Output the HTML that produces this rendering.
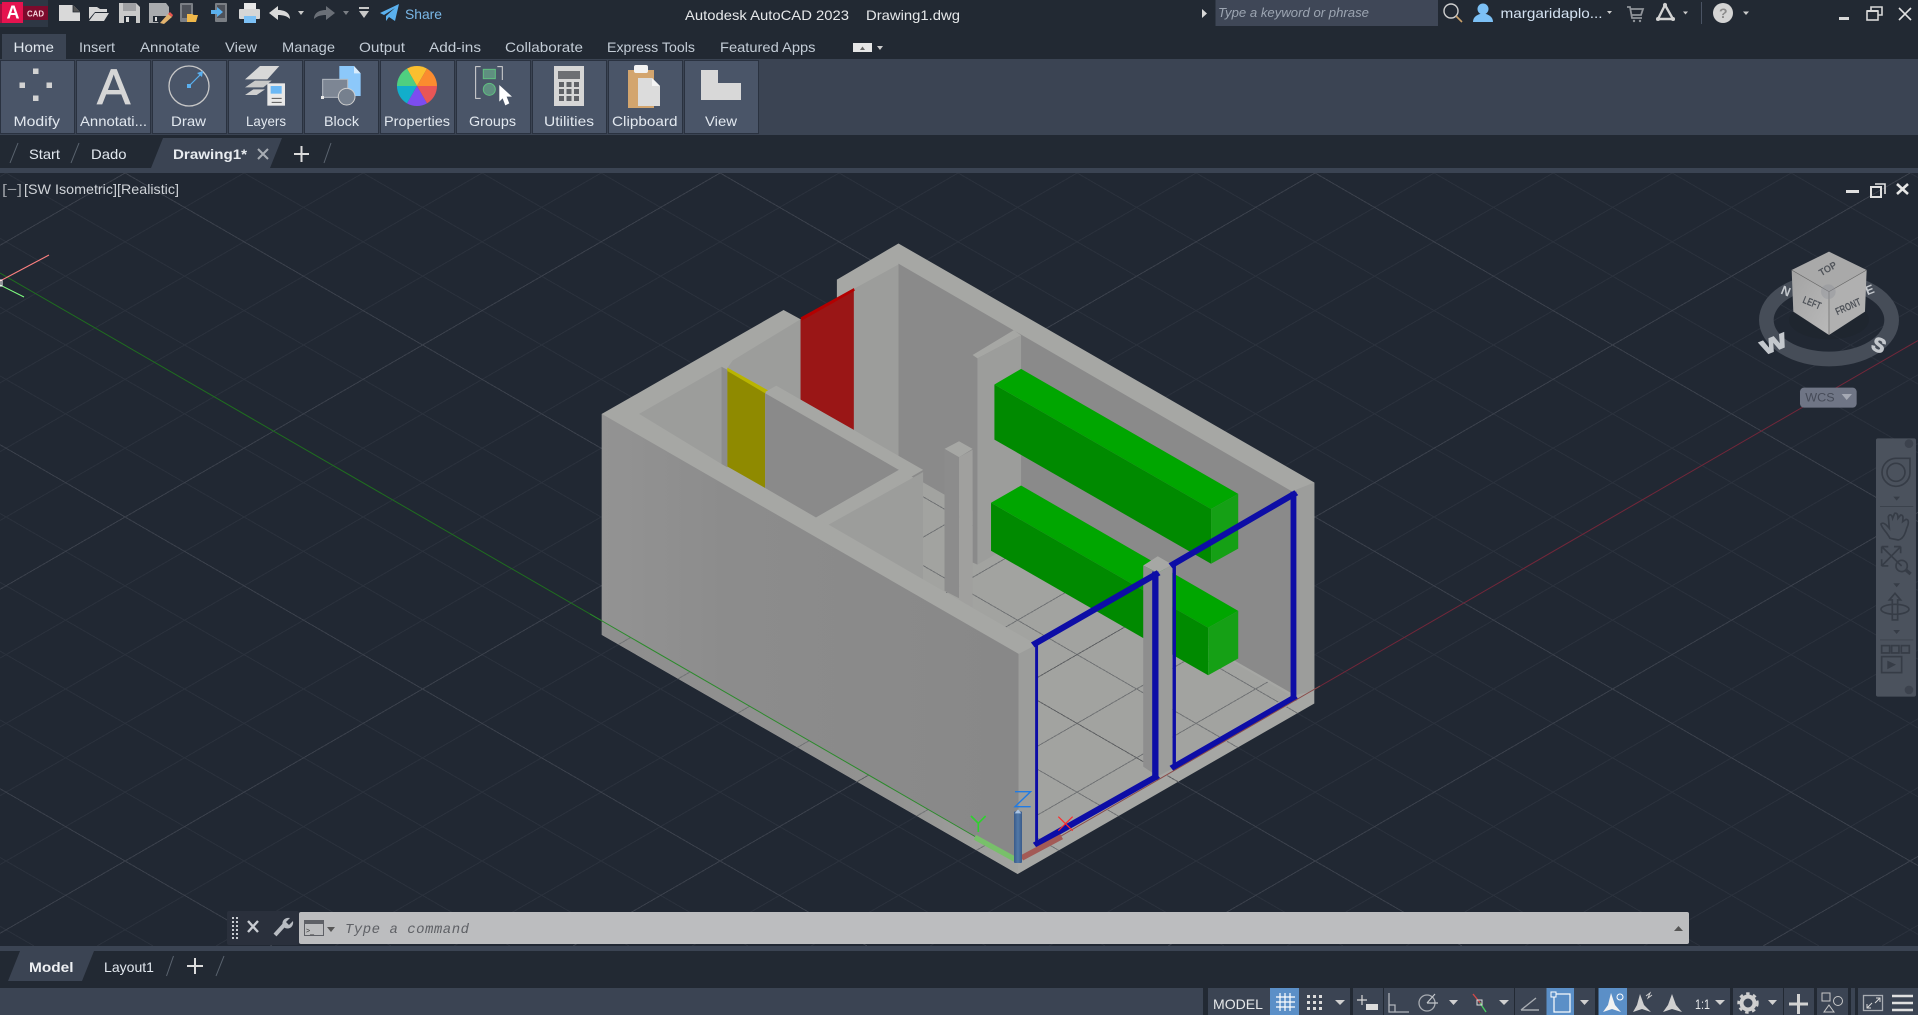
<!DOCTYPE html>
<html lang="en"><head><meta charset="utf-8"><title>Autodesk AutoCAD 2023</title>
<style>
html,body{margin:0;padding:0;width:1918px;height:1015px;background:#212833;overflow:hidden}
svg{display:block}
text{font-family:"Liberation Sans",sans-serif}
.t{font-size:14px;fill:#c3ccd6}
.p{font-size:14px;fill:#e2e8ef}
</style></head><body>
<svg xmlns="http://www.w3.org/2000/svg" width="1918" height="1015" viewBox="0 0 1918 1015">
<defs>
<path id="gminor" fill="none" shape-rendering="crispEdges" d="M1910.1 173L1918 177.6M1791.1 173L1918 246.4M1672.1 173L1918 315.2M1553.1 173L1918 384M1434.1 173L1918 452.8M1196.1 173L1918 590.4M1077.1 173L1918 659.2M958.1 173L1918 728M839.1 173L1918 796.8M601.1 173L1918 934.4M482.1 173L1819.1 946M363.1 173L1700.1 946M244.1 173L1581.1 946M6.1 173L1343.1 946M0 238.3L1224.1 946M0 307.1L1105.1 946M0 375.9L986.1 946M0 513.5L748.1 946M0 582.3L629.1 946M0 651.1L510.1 946M0 719.9L391.1 946M0 857.5L153.1 946M0 926.3L34.1 946M0 176.5L6.1 173M0 314.1L244.1 173M0 382.9L363.1 173M0 451.7L482.1 173M0 520.5L601.1 173M0 658.1L839.1 173M0 726.9L958.1 173M0 795.7L1077.1 173M0 864.5L1196.1 173M97 946L1434.1 173M216 946L1553.1 173M335 946L1672.1 173M454 946L1791.1 173M692 946L1918 237.2M811 946L1918 306M930 946L1918 374.8M1049.1 946L1918 443.6M1287.1 946L1918 581.2M1406.1 946L1918 650M1525.1 946L1918 718.8M1644.1 946L1918 787.6M1882.1 946L1918 925.2"/>
<path id="gmajor" fill="none" shape-rendering="crispEdges" d="M1315.1 173L1918 521.6M720.1 173L1918 865.6M125.1 173L1462.1 946M0 444.7L867.1 946M0 788.7L272.1 946M0 245.3L125.1 173M0 589.3L720.1 173M0 933.3L1315.1 173M573 946L1910.1 173M1168.1 946L1918 512.4M1763.1 946L1918 856.4"/>
<linearGradient id="wallg" x1="0" y1="0" x2="1" y2="0"><stop offset="0" stop-color="#939393"/><stop offset=".3" stop-color="#8c8c8c"/><stop offset="1" stop-color="#888"/></linearGradient>
<linearGradient id="stripg" x1="0" y1="0" x2="1" y2="0"><stop offset="0" stop-color="#8e8e8e"/><stop offset=".7" stop-color="#929291"/><stop offset="1" stop-color="#a3a4a1"/></linearGradient>
<linearGradient id="cubeL" x1="0" y1="0" x2="1" y2="1"><stop offset="0" stop-color="#a3a3a3"/><stop offset="1" stop-color="#b9b9b9"/></linearGradient>
<linearGradient id="zcyl" x1="0" y1="0" x2="1" y2="0"><stop offset="0" stop-color="#385a8a"/><stop offset=".5" stop-color="#5279a8"/><stop offset="1" stop-color="#385a8a"/></linearGradient>
<clipPath id="floorclip">
<polygon transform="translate(580,230) scale(.4847,.4209)" points="708,600 1465,1105 942,1460 942,985 708,830"/>
<polygon transform="translate(580,230) scale(.4847,.4209)" points="45,930 905,1500 903,1530 45,962"/>
<polygon transform="translate(580,230) scale(.4847,.4209)" points="905,1500 1515,1095 1515,1125 903,1530"/>
</clipPath>
</defs>

<!-- backgrounds -->
<rect width="1918" height="1015" fill="#212833"/>
<use href="#gminor" stroke="#2a313c"/>
<use href="#gmajor" stroke="#3a404b"/>
<rect x="0" y="0" width="1918" height="59" fill="#222933"/>
<rect x="0" y="59" width="1918" height="76" fill="#3b4453"/>
<rect x="0" y="135" width="1918" height="33" fill="#222933"/>
<rect x="0" y="168" width="1918" height="5" fill="#3b4453"/>

<!-- axis lines on the dark background -->
<line x1="0" y1="273" x2="1017.5" y2="861" stroke="#1f6e1f"/>
<line x1="1017.5" y1="861" x2="1918" y2="340.5" stroke="#73273a"/>

<!-- MODEL -->
<g transform="translate(580,230) scale(.4847,.4209)">
<polygon points="45,437 420,190 455,212 530,162 530,118 657,32 1515,600 1515,1125 903,1530 45,962" fill="#a6a7a4"/>
<polygon points="45,437 905,1007 905,1500 45,930" fill="url(#wallg)"/>
<polygon points="45,930 905,1500 903,1530 45,962" fill="url(#stripg)"/>
<polygon points="657,80 1475,625 1475,1105 708,600 657,570" fill="#8a8a8a"/>
<polygon points="565,140 657,82 657,540 565,475" fill="#9c9d9b"/>
<polygon points="315,310 455,212 455,403 405,370 382,385 304,328" fill="#9c9d9b"/>
<polygon points="455,212 565,138 565,475 455,403" fill="#9a1616"/>
<polygon points="455,208 565,138 567,144 458,215" fill="#b30000"/>
<polygon points="122,437 292,325 292,556" fill="#9c9d9b"/>
<polygon points="292,325 304,332 304,564 292,556" fill="#8c8c8c"/>
<polygon points="304,332 382,386 382,613 304,562" fill="#8f8a00"/>
<polygon points="304,327 388,381 382,388 304,335" fill="#b9b400"/>
<polygon points="382,388 658,570 487,683 382,613" fill="#8a8a8a"/>
<polygon points="382,385 405,370 708,570 513,700 487,683 658,570" fill="#a6a7a4"/>
<polygon points="513,700 708,575 708,830" fill="#9c9d9b"/>
<polygon points="708,600 1465,1105 942,1460 942,985 708,830" fill="#a2a3a0"/>
</g>
<g clip-path="url(#floorclip)">
<use href="#gminor" stroke="#727476"/>
<use href="#gmajor" stroke="#606264"/>
</g>
<g transform="translate(580,230) scale(.4847,.4209)">
<polygon points="810,297 820,305 820,795 810,790" fill="#8a8a8a"/>
<polygon points="820,305 910,250 910,735 820,795" fill="#9c9d9b"/>
<polygon points="810,297 895,238 910,250 820,305" fill="#a6a7a4"/>
<polygon points="752,520 782,502 810,520 782,540" fill="#a6a7a4"/>
<polygon points="752,520 782,540 782,875 752,857" fill="#8c8c8c"/>
<polygon points="782,540 810,522 810,897 782,878" fill="#a0a09e"/>
<!-- green boxes -->
<polygon points="855,367 910,330 1358,627 1302,663" fill="#00a600"/>
<polygon points="855,367 1302,663 1302,793 855,498" fill="#008a00"/>
<polygon points="1302,663 1358,627 1358,757 1302,793" fill="#15a015"/>
<polygon points="848,648 910,607 1358,905 1296,945" fill="#00a600"/>
<polygon points="848,648 1296,945 1296,1058 848,762" fill="#008a00"/>
<polygon points="1296,945 1358,905 1358,1018 1296,1058" fill="#15a015"/>
<!-- columns -->
<polygon points="905,1007 942,985 942,1465 905,1500" fill="#9c9d9b"/>
<polygon points="1475,618 1515,600 1515,1095 1475,1105" fill="#9c9d9b"/>
<polygon points="1162,797 1192,775 1222,795 1192,815" fill="#a6a7a4"/>
<polygon points="1162,797 1192,815 1192,1298 1162,1275" fill="#8e8e8e"/>
<polygon points="1192,815 1222,795 1222,1280 1192,1298" fill="#9c9d9b"/>
<!-- blue frames -->
<g stroke="#0d0da6" fill="none" stroke-linecap="square">
<line x1="940" y1="982" x2="1188" y2="818" stroke-width="14"/>
<line x1="1187" y1="818" x2="1187" y2="1300" stroke-width="13"/>
<line x1="1187" y1="1300" x2="944" y2="1458" stroke-width="14"/>
<line x1="942" y1="982" x2="942" y2="1460" stroke-width="6"/>
<line x1="1224" y1="794" x2="1472" y2="628" stroke-width="14"/>
<line x1="1472" y1="628" x2="1472" y2="1112" stroke-width="12"/>
<line x1="1472" y1="1112" x2="1226" y2="1275" stroke-width="14"/>
<line x1="1226" y1="794" x2="1226" y2="1278" stroke-width="7"/>
</g>
</g>
<!-- axis over model -->
<line x1="590" y1="614" x2="975" y2="836.5" stroke="#2b8a2b"/>
<line x1="1030" y1="854" x2="1320" y2="686" stroke="#8a4a48"/>

<!-- UCS icon -->
<g transform="translate(950,770) scale(.3333)">
<line x1="75" y1="202" x2="195" y2="268" stroke="#78c06a" stroke-width="16"/>
<line x1="215" y1="264" x2="335" y2="200" stroke="#a35a56" stroke-width="17"/>
<rect x="192" y="124" width="24" height="155" rx="3" fill="url(#zcyl)"/>
<polygon points="204,118 214,130 194,130" fill="#a9c4e4"/>
<path d="M195 65H242L195 110H242" stroke="#1f7be5" stroke-width="4" fill="none"/>
<path d="M63 138L85 160L107 138M85 160V186" stroke="#2fd02f" stroke-width="5" fill="none"/>
<path d="M325 140L368 182M368 140L325 182" stroke="#ff2b2b" stroke-width="3.5" fill="none"/>
</g>

<!-- origin marker left -->
<line x1="0" y1="281" x2="49" y2="255" stroke="#ff8080"/>
<line x1="0" y1="285" x2="24" y2="297" stroke="#80ff80"/>
<rect x="0" y="280" width="2" height="6" fill="none" stroke="#fff"/>

<!-- Viewcube -->
<g transform="translate(1720,230) scale(.3333)">
<ellipse cx="327" cy="270" rx="188" ry="117" fill="none" stroke="#464d58" stroke-width="44"/>
<ellipse cx="327" cy="270" rx="120" ry="58" fill="#1d232c" opacity=".5"/>
<text transform="translate(132,376) rotate(-22)" font-size="60" font-weight="bold" fill="#c4c8cd" stroke="#c4c8cd" stroke-width="3" textLength="80" lengthAdjust="spacingAndGlyphs">W</text>
<text transform="translate(450,356) rotate(24)" font-size="60" font-weight="bold" fill="#c4c8cd" stroke="#c4c8cd" stroke-width="3">S</text>
<text transform="translate(180,190) rotate(22)" font-size="38" font-weight="bold" fill="#c4c8cd">N</text>
<text transform="translate(442,196) rotate(-22)" font-size="38" font-weight="bold" fill="#c4c8cd">E</text>
<polygon points="327,65 440,120 327,185 215,120" fill="#a9a9a9"/>
<polygon points="215,120 327,185 327,315 220,245" fill="url(#cubeL)"/>
<polygon points="327,185 440,120 435,245 327,315" fill="#b0b0b0"/>
<path d="M215 120L327 185L440 120M327 185V315" stroke="#666" stroke-width="2" fill="none"/>
<circle cx="325" cy="185" r="22" fill="#8e9298" opacity=".4"/>
<text transform="translate(304,139) rotate(-30)" font-size="30" font-weight="bold" fill="#50545a" textLength="56" lengthAdjust="spacingAndGlyphs">TOP</text>
<text transform="translate(246,218) rotate(22)" font-size="32" font-weight="bold" fill="#50545a" textLength="56" lengthAdjust="spacingAndGlyphs">LEFT</text>
<text transform="translate(352,256) rotate(-24)" font-size="32" font-weight="bold" fill="#50545a" textLength="80" lengthAdjust="spacingAndGlyphs">FRONT</text>
<rect x="240" y="473" width="170" height="60" rx="12" fill="#6f7585"/>
<text x="256" y="515" font-size="36" fill="#464b58" textLength="88" lengthAdjust="spacingAndGlyphs">WCS</text>
<polygon points="365,492 396,492 380,510" fill="#a5a9b4"/>
</g>

<!-- Nav bar -->
<g transform="translate(1720,230) scale(.3333)" fill="none" stroke="#363c46" stroke-width="5">
<rect x="468" y="625" width="120" height="775" rx="6" fill="#4b525d" stroke="none"/>
<circle cx="567" cy="641" r="13" fill="#3c424d" stroke="none"/>
<path d="M528 685H570V730A42 42 0 1 1 528 685Z"/>
<circle cx="528" cy="727" r="27"/>
<polygon points="520,800 540,800 530,812" fill="#363c46" stroke="none"/>
<line x1="480" y1="830" x2="580" y2="830" stroke-width="2"/>
<path d="M510 925C500 905 485 895 483 882C490 875 500 885 508 895L505 860C510 850 516 855 518 865L524 850C532 848 534 855 534 865L542 855C550 855 550 862 548 875L558 868C566 868 568 878 560 895C555 915 548 928 535 930Z"/>
<path d="M485 950L545 1008M542 950L485 1008M485 950H505M485 950V970M542 950H522M542 950V970M485 1008H505M485 1008V988"/>
<circle cx="545" cy="1008" r="17"/>
<line x1="558" y1="1020" x2="572" y2="1032" stroke-width="10"/>
<polygon points="520,1060 540,1060 530,1072" fill="#363c46" stroke="none"/>
<path d="M525 1090L542 1110H533V1170H517V1110H508Z"/>
<ellipse cx="525" cy="1138" rx="42" ry="15"/>
<polygon points="520,1200 540,1200 530,1212" fill="#363c46" stroke="none"/>
<line x1="480" y1="1230" x2="580" y2="1230" stroke-width="2"/>
<rect x="485" y="1247" width="24" height="22"/><rect x="515" y="1247" width="22" height="22"/><rect x="544" y="1247" width="24" height="22"/>
<rect x="485" y="1280" width="60" height="48"/>
<polygon points="502,1292 528,1304 502,1318" fill="#363c46" stroke="none"/>
<circle cx="567" cy="1380" r="13" fill="#3c424d" stroke="none"/>
</g>

<!-- Logo & QAT -->
<rect x="0" y="0" width="48" height="27" fill="#2e3744"/>
<rect x="23" y="6" width="25" height="14" fill="#7c0a2c"/>
<rect x="0" y="4" width="4" height="19" fill="#a60f40"/>
<rect x="2" y="2" width="21" height="21" fill="#e5134f"/>
<text x="6.5" y="18.5" font-size="18" font-weight="bold" fill="#fff">A</text>
<text x="27" y="16.5" font-size="8.5" font-weight="bold" fill="#f5d5dc" textLength="17" lengthAdjust="spacingAndGlyphs">CAD</text>
<path d="M59 5H73L80 12V21H59Z" fill="#d9d9d9"/><path d="M73 5V12H80" fill="#555" stroke="#222933" stroke-width=".8"/>
<path d="M89 7H97L100 9H107V12H95L89 19ZM95 13H109L104 21H89Z" fill="#d6d6d6"/>
<g><path d="M119 3H136L140 7V23H119Z" fill="#c9c9c9"/><rect x="123" y="3" width="13" height="8" fill="#222933" opacity=".25"/><rect x="124" y="16" width="12" height="7" fill="#222933"/><rect x="126" y="17" width="3" height="5" fill="#ddd"/></g>
<g><path d="M149 3H166L169 7V16H162L158 23H149Z" fill="#a9abae"/><rect x="153" y="16" width="9" height="6" fill="#222933"/><rect x="155" y="17" width="2" height="4" fill="#ddd"/><path d="M160 23L168 14L172 17L164 24Z" fill="#e3b36f"/><path d="M168 14L170 12L173 15L172 17Z" fill="#e8554f"/></g>
<g><rect x="180" y="3" width="13" height="19" rx="1" fill="#7b7f85"/><rect x="182" y="5" width="9" height="13" fill="#4d5159"/><path d="M187 14H192L194 15H198L196 22H187Z" fill="#f0b84a"/></g>
<g><rect x="215" y="3" width="12" height="19" rx="1" fill="#7b7f85"/><rect x="217" y="5" width="8" height="13" fill="#4d5159"/><path d="M211 10H217V7L223 12L217 17V14H211Z" fill="#5ab0ee"/></g>
<g><rect x="244" y="3" width="12" height="6" fill="#e8e8e8"/><rect x="239" y="9" width="21" height="10" rx="1" fill="#d6d6d6"/><rect x="244" y="16" width="12" height="7" fill="#7cc0f5"/></g>
<path d="M269 13L278 6V10C285 10 290 13 290 19C287 16 283 15 278 15V20Z" fill="#d9d9d9"/>
<polygon points="298,11 304,11 301,15" fill="#c8c8c8"/>
<path d="M335 13L326 6V10C319 10 314 13 314 19C317 16 321 15 326 15V20Z" fill="#6a6f77"/>
<polygon points="343,11 349,11 346,15" fill="#7b7f85"/>
<rect x="359" y="7" width="10" height="2" fill="#c8c8c8"/><polygon points="359,11 369,11 364,18" fill="#c8c8c8"/>
<path d="M380 13L399 4L395 21L389 17L386 21V16L395 8L384 15Z" fill="#5ab0ee"/>
<text x="405" y="19" font-size="14" fill="#7ab8e8" textLength="37" lengthAdjust="spacingAndGlyphs">Share</text>

<!-- Title -->
<text x="685" y="20" font-size="14" fill="#e6e8ea" textLength="164" lengthAdjust="spacingAndGlyphs">Autodesk AutoCAD 2023</text>
<text x="866" y="20" font-size="14" fill="#e6e8ea" textLength="94" lengthAdjust="spacingAndGlyphs">Drawing1.dwg</text>
<polygon points="1202,9 1207,13.5 1202,18" fill="#d8d8d8"/>
<rect x="1215.5" y="0" width="222.5" height="26" fill="#3f4757"/>
<text x="1218" y="17" font-size="13" font-style="italic" fill="#9ca5b2" textLength="151" lengthAdjust="spacingAndGlyphs">Type a keyword or phrase</text>
<circle cx="1451" cy="11" r="7" fill="none" stroke="#cfcfcf" stroke-width="1.4"/><line x1="1456" y1="16" x2="1462" y2="22" stroke="#c9a06a" stroke-width="1.6"/>
<circle cx="1483" cy="9" r="5.5" fill="#7cc0f5"/><path d="M1473 22C1473 17 1477 15 1480 14H1486C1489 15 1493 17 1493 22Z" fill="#7cc0f5"/>
<text x="1500.5" y="18" font-size="14" fill="#d4e2f2" textLength="102" lengthAdjust="spacingAndGlyphs">margaridaplo...</text>
<polygon points="1607,11 1612,11 1609.5,14" fill="#ccc"/>
<path d="M1627 7H1630L1632 18H1642M1631 9H1643L1641 15H1632" fill="none" stroke="#8f9399" stroke-width="1.8"/><circle cx="1634" cy="21" r="1.2" fill="#8f9399"/><circle cx="1640" cy="21" r="1.2" fill="#8f9399"/>
<path d="M1665 5L1673 19H1658Z" fill="none" stroke="#d2d2d2" stroke-width="2.4"/><circle cx="1665" cy="5" r="2" fill="#d2d2d2"/><circle cx="1658" cy="19" r="2" fill="#d2d2d2"/><circle cx="1673" cy="19" r="2" fill="#d2d2d2"/>
<polygon points="1683,11.5 1688,11.5 1685.5,14.5" fill="#ccc"/>
<rect x="1701" y="2" width="1" height="22" fill="#4a5363"/>
<circle cx="1723" cy="13" r="10" fill="#d4d4d4"/><text x="1719" y="18" font-size="14" font-weight="bold" fill="#8c8c8c">?</text>
<polygon points="1743,11.5 1749,11.5 1746,15" fill="#ccc"/>
<rect x="1839" y="17" width="10" height="3" fill="#d8d8d8"/>
<rect x="1867" y="11" width="11" height="9" fill="none" stroke="#d8d8d8" stroke-width="1.6"/><path d="M1871 11V7H1882V15H1878" fill="none" stroke="#d8d8d8" stroke-width="1.6"/><rect x="1867" y="10" width="11" height="2" fill="#d8d8d8"/>
<path d="M1899 8L1911 20M1911 8L1899 20" stroke="#e2e2e2" stroke-width="1.6"/>

<!-- ribbon tabs -->
<rect x="2" y="34" width="64" height="25" fill="#3b4453"/>
<text x="13.5" y="52" class="p" textLength="40.5" lengthAdjust="spacingAndGlyphs">Home</text>
<text x="79" y="52" class="t" textLength="36" lengthAdjust="spacingAndGlyphs">Insert</text>
<text x="140" y="52" class="t" textLength="60" lengthAdjust="spacingAndGlyphs">Annotate</text>
<text x="225" y="52" class="t" textLength="32" lengthAdjust="spacingAndGlyphs">View</text>
<text x="282" y="52" class="t" textLength="53" lengthAdjust="spacingAndGlyphs">Manage</text>
<text x="359" y="52" class="t" textLength="46" lengthAdjust="spacingAndGlyphs">Output</text>
<text x="429" y="52" class="t" textLength="52" lengthAdjust="spacingAndGlyphs">Add-ins</text>
<text x="505" y="52" class="t" textLength="78" lengthAdjust="spacingAndGlyphs">Collaborate</text>
<text x="607" y="52" class="t" textLength="88" lengthAdjust="spacingAndGlyphs">Express Tools</text>
<text x="720" y="52" class="t" textLength="95.5" lengthAdjust="spacingAndGlyphs">Featured Apps</text>
<rect x="853" y="43" width="19" height="9" fill="#e6e6e6"/><polygon points="860,50 865,50 862.5,46.5" fill="#666"/><polygon points="877,46 883,46 880,50" fill="#ccc"/>

<!-- ribbon panels -->
<g fill="#4a5568" stroke="#2a3240" stroke-width="1">
<rect x="0.5" y="60.5" width="74" height="73"/><rect x="76.5" y="60.5" width="74" height="73"/><rect x="152.5" y="60.5" width="74" height="73"/><rect x="228.5" y="60.5" width="74" height="73"/><rect x="304.5" y="60.5" width="74" height="73"/><rect x="380.5" y="60.5" width="74" height="73"/><rect x="456.5" y="60.5" width="74" height="73"/><rect x="532.5" y="60.5" width="74" height="73"/><rect x="608.5" y="60.5" width="74" height="73"/><rect x="684.5" y="60.5" width="74" height="73"/>
</g>
<text x="13.5" y="126" class="p" textLength="46.5" lengthAdjust="spacingAndGlyphs">Modify</text>
<text x="80" y="126" class="p" textLength="67" lengthAdjust="spacingAndGlyphs">Annotati...</text>
<text x="171" y="126" class="p" textLength="35" lengthAdjust="spacingAndGlyphs">Draw</text>
<text x="246" y="126" class="p" textLength="40" lengthAdjust="spacingAndGlyphs">Layers</text>
<text x="324" y="126" class="p" textLength="35" lengthAdjust="spacingAndGlyphs">Block</text>
<text x="384" y="126" class="p" textLength="66" lengthAdjust="spacingAndGlyphs">Properties</text>
<text x="469" y="126" class="p" textLength="47" lengthAdjust="spacingAndGlyphs">Groups</text>
<text x="544" y="126" class="p" textLength="50" lengthAdjust="spacingAndGlyphs">Utilities</text>
<text x="612" y="126" class="p" textLength="65.5" lengthAdjust="spacingAndGlyphs">Clipboard</text>
<text x="705" y="126" class="p" textLength="32" lengthAdjust="spacingAndGlyphs">View</text>

<!-- ribbon icons -->
<g fill="#d2d2d2"><rect x="33" y="68.5" width="5.5" height="5.5"/><rect x="19.5" y="82.5" width="5.5" height="5.5"/><rect x="46.5" y="82.5" width="5.5" height="5.5"/><rect x="33" y="95.5" width="5.5" height="5.5"/></g>
<text x="97" y="104" font-size="50" fill="#d6d6d6" stroke="#d6d6d6" stroke-width=".8">A</text>
<circle cx="189" cy="86" r="20" fill="none" stroke="#c8c8c8" stroke-width="1.3"/><line x1="189" y1="86" x2="202" y2="73" stroke="#5ab0f0" stroke-width="1.2"/><rect x="187" y="84" width="4" height="4" fill="#5ab0f0"/><polygon points="203,71 202,77 197,73" fill="#5ab0f0"/>
<g transform="translate(240,60) scale(.3333)">
<polygon points="15,105 40,88 75,88 50,105" fill="#d0d0d0"/>
<polygon points="15,82 45,62 95,62 70,82" fill="#c8c8c8"/>
<polygon points="15,58 60,18 118,18 82,58" fill="#d8d8d8"/>
<rect x="82" y="70" width="53" height="67" fill="#e8e8e8"/><rect x="92" y="78" width="33" height="23" fill="#6bb8f5"/>
<path d="M95 115H125M95 127H125" stroke="#555" stroke-width="3"/>
<path d="M298 18H342L362 40V108H298Z" fill="#8cc8fa"/><path d="M342 18V40H362" fill="#d8ecfc"/>
<rect x="248" y="58" width="75" height="54" fill="#7d8694" stroke="#b4bac2" stroke-width="3"/>
<circle cx="320" cy="110" r="25" fill="#76808e" stroke="#cfcfcf" stroke-width="3"/>
<rect x="243" y="108" width="9" height="9" fill="#e8e8e8"/>
<path d="M501 26A60 60 0 0 1 561 26L531 78Z" fill="#fbbf2f"/><path d="M561 26A60 60 0 0 1 591 78H531Z" fill="#fb8c2f"/><path d="M591 78A60 60 0 0 1 561 130L531 78Z" fill="#e85656"/><path d="M561 130A60 60 0 0 1 501 130L531 78Z" fill="#7d4df0"/><path d="M501 130A60 60 0 0 1 471 78H531Z" fill="#12aecb"/><path d="M471 78A60 60 0 0 1 501 26L531 78Z" fill="#4fcf80"/>
<path d="M722 20H707V115H722M772 20H787V60" fill="none" stroke="#d5d5d5" stroke-width="3"/>
<rect x="730" y="28" width="36" height="28" fill="#5f8f80" stroke="#60c080" stroke-width="3"/>
<circle cx="748" cy="88" r="18" fill="#5f8f80" stroke="#60c080" stroke-width="3"/>
<polygon points="778,75 816,110 800,110 808,130 796,136 788,115 778,125" fill="#fff"/>
</g>
<rect x="554" y="66" width="30" height="40" fill="#d6d6d6"/><rect x="558" y="71" width="22" height="8" fill="#6d6f73"/>
<g fill="#5f6166"><rect x="559" y="82" width="5" height="5"/><rect x="566.5" y="82" width="5" height="5"/><rect x="574" y="82" width="5" height="5"/><rect x="559" y="89" width="5" height="5"/><rect x="566.5" y="89" width="5" height="5"/><rect x="574" y="89" width="5" height="5"/><rect x="559" y="96" width="5" height="5"/><rect x="566.5" y="96" width="5" height="5"/><rect x="574" y="96" width="5" height="5"/></g>
<rect x="628" y="70" width="26" height="38" fill="#d3a56e"/><rect x="634" y="65" width="14" height="8" rx="2" fill="#f2f2f2"/><path d="M638 78H652L660 86V106H638Z" fill="#dcdcdc"/><path d="M652 78V86H660" fill="#f4f4f4"/>
<polygon points="701,70 718,70 718,83 741,83 741,100 701,100" fill="#d8d8d8"/>

<!-- doc tabs -->
<polygon points="151,168 163,138 282,138 270,168" fill="#3b4453"/>
<g stroke="#5b6470" stroke-width="1" fill="none"><path d="M10 163L18 143M71 163L79 143M324 163L331 143"/></g>
<text x="29" y="159" class="p" textLength="31" lengthAdjust="spacingAndGlyphs">Start</text>
<text x="91" y="159" class="p" textLength="35.5" lengthAdjust="spacingAndGlyphs">Dado</text>
<text x="173" y="159" font-size="14" font-weight="bold" fill="#e8ecf0" textLength="74" lengthAdjust="spacingAndGlyphs">Drawing1*</text>
<path d="M258 149L268 159M268 149L258 159" stroke="#a8adb4" stroke-width="2"/>
<path d="M294 154H309M301.5 146V162" stroke="#dcdcdc" stroke-width="2"/>

<!-- viewport label -->
<text x="2" y="194" font-size="14" fill="#a0a4aa" textLength="20" lengthAdjust="spacingAndGlyphs">[−]</text>
<text x="24" y="194" font-size="14" fill="#cfd3d8" textLength="155" lengthAdjust="spacingAndGlyphs">[SW Isometric][Realistic]</text>
<rect x="1846" y="190" width="13" height="3" fill="#e0e0e0"/>
<rect x="1871" y="187" width="10" height="10" fill="none" stroke="#e0e0e0" stroke-width="2"/><path d="M1875 184H1885V194" fill="none" stroke="#e0e0e0" stroke-width="1.6"/>
<path d="M1897 184L1908 194M1908 184L1897 194" stroke="#e6e6e6" stroke-width="2.6"/>

<!-- command line -->
<rect x="227" y="911" width="72" height="34" rx="2" fill="#2a303c"/>
<rect x="299" y="912" width="1390" height="32" rx="2" fill="#bcbdbf"/>
<g fill="#c8ccd2"><rect x="232" y="917" width="2" height="2"/><rect x="236" y="917" width="2" height="2"/><rect x="232" y="921" width="2" height="2"/><rect x="236" y="921" width="2" height="2"/><rect x="232" y="925" width="2" height="2"/><rect x="236" y="925" width="2" height="2"/><rect x="232" y="929" width="2" height="2"/><rect x="236" y="929" width="2" height="2"/><rect x="232" y="933" width="2" height="2"/><rect x="236" y="933" width="2" height="2"/><rect x="232" y="937" width="2" height="2"/><rect x="236" y="937" width="2" height="2"/></g>
<path d="M248 921L258 932M258 921L248 932" stroke="#c8ccd2" stroke-width="2.4"/>
<path d="M275 935L285 924" stroke="#b8bcc2" stroke-width="4"/><path d="M283 926C281 921 285 917 290 918L286 922L289 925L293 921C294 926 290 930 285 928Z" fill="#b8bcc2"/>
<rect x="304.5" y="920.5" width="19" height="15" fill="#bcbdbf" stroke="#5e6066"/><rect x="304" y="920" width="20" height="4" fill="#5e6066"/>
<text x="306" y="933" font-size="7" fill="#333">&gt;_</text>
<polygon points="327,927 335,927 331,932" fill="#555"/>
<text x="345" y="933" font-size="14" font-style="italic" fill="#5f6166" textLength="124" style="font-family:'Liberation Mono',monospace">Type a command</text>
<polygon points="1674,931 1683,931 1678.5,926" fill="#555"/>

<!-- bottom bars -->
<rect x="0" y="946" width="1918" height="5" fill="#3b4453"/>
<rect x="0" y="951" width="1918" height="37" fill="#222933"/>
<polygon points="8,981 20,951 94,951 82,981" fill="#3b4453"/>
<text x="29" y="972" font-size="14" font-weight="bold" fill="#eef0f3" textLength="44.5" lengthAdjust="spacingAndGlyphs">Model</text>
<text x="104" y="972" class="p" textLength="50" lengthAdjust="spacingAndGlyphs">Layout1</text>
<path d="M166.5 976L173.5 956M216 976L224 956" stroke="#5b6470" fill="none"/>
<path d="M187 966H203M195 958V974" stroke="#dcdcdc" stroke-width="2"/>

<!-- status bar -->
<rect x="0" y="988" width="1918" height="27" fill="#3b4453"/>
<rect x="1203" y="988" width="715" height="27" fill="#222933"/>
<g fill="#3b4453">
<rect x="1208" y="988" width="142" height="27"/><rect x="1353" y="988" width="30" height="27"/><rect x="1384" y="988" width="130" height="27"/><rect x="1515" y="988" width="80" height="27"/><rect x="1598.5" y="988" width="131.5" height="27"/><rect x="1733" y="988" width="50" height="27"/><rect x="1784" y="988" width="30" height="27"/><rect x="1817" y="988" width="31" height="27"/><rect x="1851" y="988" width="4" height="27"/><rect x="1858" y="988" width="60" height="27"/>
</g>
<text x="1213" y="1009" font-size="14" fill="#e6e8ea" textLength="50" lengthAdjust="spacingAndGlyphs">MODEL</text>
<rect x="1270" y="988" width="29" height="27" fill="#5b8fc7"/>
<path d="M1276 997H1295M1276 1002H1295M1276 1007H1295M1280 993V1011M1285 993V1011M1290 993V1011" stroke="#fff" stroke-width="1.2"/>
<g fill="#dcdcdc"><rect x="1307" y="995" width="3" height="3"/><rect x="1313" y="995" width="3" height="3"/><rect x="1319" y="995" width="3" height="3"/><rect x="1307" y="1001" width="3" height="3"/><rect x="1313" y="1001" width="3" height="3"/><rect x="1319" y="1001" width="3" height="3"/><rect x="1307" y="1007" width="3" height="3"/><rect x="1313" y="1007" width="3" height="3"/><rect x="1319" y="1007" width="3" height="3"/></g>
<polygon points="1335,1000 1345,1000 1340,1005" fill="#d0d0d0"/>
<path d="M1357 1000H1367M1362 995V1005" stroke="#d8d8d8" stroke-width="1.2"/><rect x="1366" y="1004" width="12" height="6" fill="#dcdcdc"/>
<path d="M1389 993V1012H1409M1389 1005H1395V1012" fill="none" stroke="#b0b4ba" stroke-width="1.3"/>
<circle cx="1427" cy="1003" r="8" fill="none" stroke="#a8acb2" stroke-width="1.3"/><path d="M1427 1003H1438M1427 1003L1435 994" stroke="#c4c8cc" stroke-width="1.2"/>
<polygon points="1449,1000 1458,1000 1453.5,1005" fill="#d0d0d0"/>
<line x1="1473" y1="994" x2="1481" y2="1004" stroke="#d04848" stroke-width="1.4"/><line x1="1480" y1="1003" x2="1486" y2="1012" stroke="#48c860" stroke-width="1.4"/><rect x="1477" y="1000" width="5" height="5" fill="none" stroke="#ddd"/>
<polygon points="1499,1000 1509,1000 1504,1005" fill="#d0d0d0"/>
<path d="M1521 1010H1539M1521 1010L1536 998" stroke="#a8acb2" stroke-width="1.4" fill="none"/>
<rect x="1546.5" y="988" width="27.5" height="27" fill="#5b8fc7"/><rect x="1554" y="994" width="16" height="18" fill="none" stroke="#fff" stroke-width="1.2"/><rect x="1551" y="992" width="5" height="5" fill="#5b8fc7" stroke="#fff"/>
<polygon points="1580,1000 1589,1000 1584.5,1005" fill="#d0d0d0"/>
<rect x="1598.5" y="988" width="28.5" height="27" fill="#5b8fc7"/>
<path d="M1611 993L1615 1005L1621 1012L1612 1009L1603 1012L1608 1005Z" fill="#f2f2f2"/><circle cx="1620" cy="997" r="3" fill="none" stroke="#fff"/>
<path d="M1640 994L1644 1005L1651 1012L1642 1009L1633 1012L1637 1005Z" fill="#d0d0d0"/><path d="M1646 996L1650 993L1648 998L1652 995" stroke="#d0d0d0" fill="none"/>
<path d="M1672 994L1676 1005L1682 1012L1672 1009L1663 1012L1668 1005Z" fill="#d0d0d0"/>
<text x="1695" y="1009" font-size="14" fill="#e6e8ea" textLength="15" lengthAdjust="spacingAndGlyphs">1:1</text>
<polygon points="1715,1000 1725,1000 1720,1005" fill="#d0d0d0"/>
<circle cx="1748" cy="1003" r="6.5" fill="none" stroke="#cfcfcf" stroke-width="4"/><circle cx="1748" cy="1003" r="9.5" fill="none" stroke="#cfcfcf" stroke-width="2.4" stroke-dasharray="3.5 3.6"/>
<polygon points="1768,1000 1777,1000 1772.5,1005" fill="#d0d0d0"/>
<path d="M1789 1004H1808M1798.5 994V1014" stroke="#d2d2d2" stroke-width="3"/>
<rect x="1822" y="993" width="8" height="8" fill="none" stroke="#c8c8c8"/><circle cx="1838" cy="1001" r="4.5" fill="none" stroke="#c8c8c8"/><path d="M1829 1005L1834 1012H1824Z" fill="none" stroke="#c8c8c8"/>
<rect x="1863.5" y="995.5" width="19" height="15" fill="none" stroke="#a8acb2" stroke-width="1.3"/><path d="M1876 998H1880V1002M1880 998L1875 1003M1871 1008H1867V1004M1867 1008L1872 1003" stroke="#d8d8d8" fill="none"/>
<path d="M1892 996H1913M1892 1003H1913M1892 1010H1913" stroke="#e0e0e0" stroke-width="2.4"/>
</svg>
</body></html>
